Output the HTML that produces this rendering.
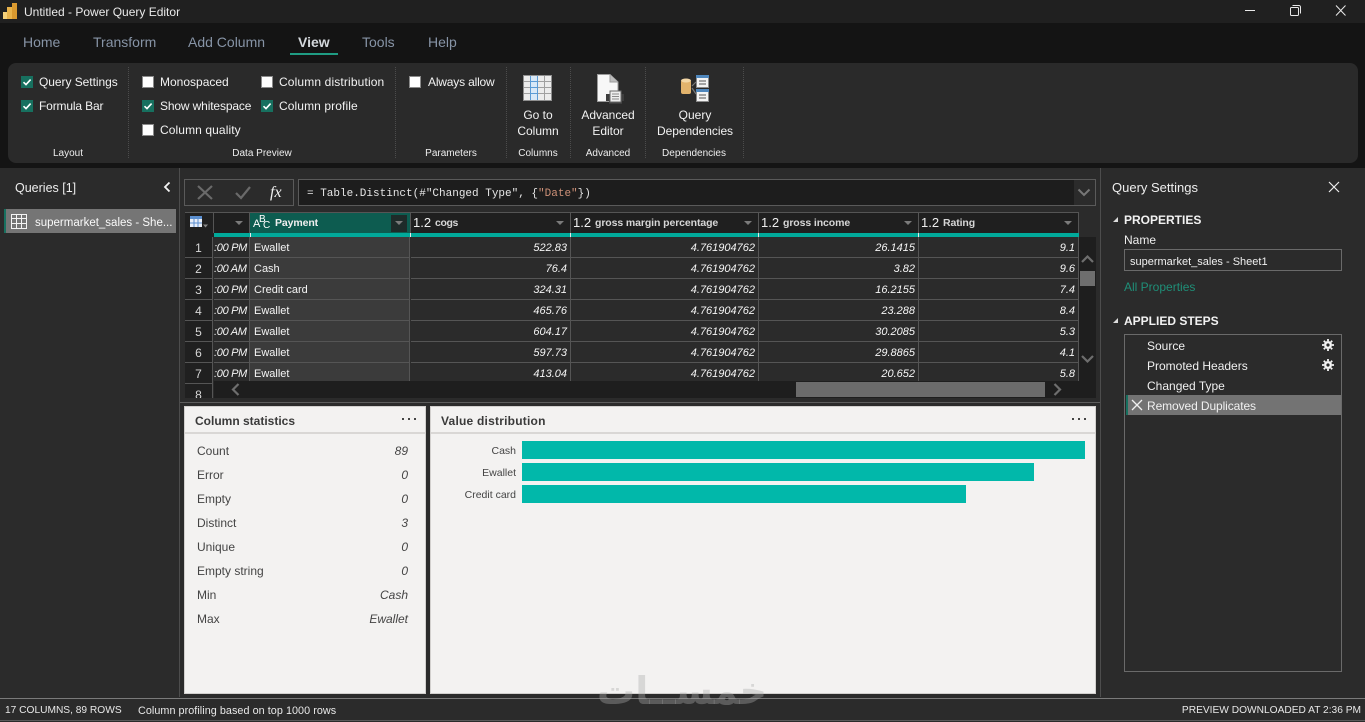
<!DOCTYPE html>
<html lang="en">
<head>
<meta charset="utf-8">
<title>Untitled - Power Query Editor</title>
<style>
html,body{margin:0;padding:0;width:1365px;height:722px;overflow:hidden;background:#2b2b2b}
body{position:relative;font-family:"Liberation Sans",sans-serif;font-size:12px;color:#f0f0f0}
.a,.t,svg{position:absolute}
.t{white-space:nowrap;line-height:16px;height:16px}
.tab{font-size:14px;color:#8794a6;top:34px}
.cb{position:absolute;width:12px;height:12px;border:1px solid #8a8a8a;background:#fff;box-sizing:border-box}
.cb.on{background:#17705f;border-color:#17705f}
.cb.on svg{left:-1px;top:-1px}
.lbl{font-size:12px;color:#f2f2f2}
.grp{font-size:10px;color:#eee;top:146px;transform:translateX(-50%)}
.div{position:absolute;top:67px;height:91px;width:0;border-left:1px dotted #4c4c4c}
.ctr{transform:translateX(-50%);font-size:12px;color:#f2f2f2}
.r{position:absolute;left:185px;width:894px;height:21px;overflow:hidden}
.c{position:absolute;top:0;height:20px;line-height:22px;border-bottom:1px solid #555;border-right:1px solid #555;font-size:11px;white-space:nowrap;box-sizing:content-box;overflow:hidden;color:#f5f5f5}
.n{text-align:right;font-style:italic;padding-right:3px;box-sizing:border-box;height:21px}
.rn{left:0;width:28px;text-align:center;background:#202020;font-size:12px;color:#d8d8d8;box-sizing:border-box;height:21px}
.tm{left:29px;width:36px;text-align:left;font-style:italic;box-sizing:border-box;height:21px;letter-spacing:-.3px}
.pay{left:65px;width:160px;background:#3b3b3b;padding-left:4px;box-sizing:border-box;height:21px}
.c1{left:226px;width:160px}
.c2{left:386px;width:188px}
.c3{left:574px;width:160px}
.c4{left:734px;width:160px}
.h{position:absolute;top:212px;height:21px;background:#1f1f1f;border:1px solid #555;border-width:1px 1px 0 0;box-sizing:border-box;color:#e4e4e4}
.ty{position:absolute;left:2px;top:1px;font-size:13px;line-height:18px;color:#eee}
.hn{position:absolute;top:1px;font-size:10.5px;font-weight:bold;line-height:18px;white-space:nowrap;color:#d6d6d6;letter-spacing:-.1px}
.ar{position:absolute;top:8px;width:0;height:0;border:4px solid transparent;border-top:4px solid #7b7b7b;border-bottom:0}
.panel{position:absolute;top:406px;height:288px;background:#f3f2f1;border:1px solid #d2d0ce;box-sizing:border-box}
.ph{position:absolute;left:0;right:0;top:0;height:25px;border-bottom:2px solid #d9d7d5}
.st{font-size:12px;color:#444;}
.sv{font-size:12px;color:#444;font-style:italic;text-align:right;width:60px}
.bar{position:absolute;left:522px;height:18px;background:#01b8aa}
.bl{font-size:10.5px;color:#444;text-align:right;width:90px;left:426px}
.stp{font-size:12px;color:#f0f0f0;left:1147px}
</style>
</head>
<body>
<!-- backgrounds -->
<div class="a" style="left:0;top:0;width:1365px;height:23px;background:#202020"></div>
<div class="a" style="left:0;top:23px;width:1365px;height:145px;background:#141414"></div>
<div class="a" style="left:8px;top:63px;width:1350px;height:100px;background:#2a2a2a;border-radius:8px"></div>

<!-- title bar -->
<svg style="left:3px;top:3px" width="15" height="16" viewBox="0 0 15 16"><rect x="0" y="9" width="5" height="7" fill="#f6d27a"/><rect x="4" y="4" width="5" height="12" fill="#e9b44c"/><rect x="9" y="0" width="5" height="16" fill="#d9992f"/></svg>
<div class="t" style="left:24px;top:4px;font-size:12px;color:#eaeaea">Untitled - Power Query Editor</div>
<svg style="left:1240px;top:4px" width="120" height="14" viewBox="0 0 120 14" fill="none" stroke="#e8e8e8" stroke-width="1"><path d="M5 6.500H15"/><rect x="50.500" y="3.500" width="8" height="8" rx="1"/><path d="M52.500 1.500H59a1.500 1.500 0 0 1 1.500 1.500V9.500"/><path d="M96 1.500L105.500 11.500M105.500 1.500L96 11.500"/></svg>

<!-- tabs -->
<div class="t tab" style="left:23px">Home</div>
<div class="t tab" style="left:93px">Transform</div>
<div class="t tab" style="left:188px">Add Column</div>
<div class="t tab" style="left:298px;color:#d4d8dc;font-weight:bold">View</div>
<div class="t tab" style="left:362px">Tools</div>
<div class="t tab" style="left:428px">Help</div>
<div class="a" style="left:290px;top:53px;width:48px;height:2px;background:#1f9c83"></div>

<!-- ribbon check boxes -->
<div class="cb on" style="left:21px;top:76px"><svg width="12" height="12" viewBox="0 0 12 12"><path d="M2.500 6.200L5 8.600L9.600 3.600" fill="none" stroke="#fff" stroke-width="1.600"/></svg></div>
<div class="t lbl" style="left:39px;top:74px;letter-spacing:-.05px">Query Settings</div>
<div class="cb on" style="left:21px;top:100px"><svg width="12" height="12" viewBox="0 0 12 12"><path d="M2.500 6.200L5 8.600L9.600 3.600" fill="none" stroke="#fff" stroke-width="1.600"/></svg></div>
<div class="t lbl" style="left:39px;top:98px;letter-spacing:-.15px">Formula Bar</div>
<div class="cb" style="left:142px;top:76px"></div>
<div class="t lbl" style="left:160px;top:74px">Monospaced</div>
<div class="cb on" style="left:142px;top:100px"><svg width="12" height="12" viewBox="0 0 12 12"><path d="M2.500 6.200L5 8.600L9.600 3.600" fill="none" stroke="#fff" stroke-width="1.600"/></svg></div>
<div class="t lbl" style="left:160px;top:98px;letter-spacing:-.14px">Show whitespace</div>
<div class="cb" style="left:142px;top:124px"></div>
<div class="t lbl" style="left:160px;top:122px;letter-spacing:.1px">Column quality</div>
<div class="cb" style="left:261px;top:76px"></div>
<div class="t lbl" style="left:279px;top:74px;letter-spacing:.14px">Column distribution</div>
<div class="cb on" style="left:261px;top:100px"><svg width="12" height="12" viewBox="0 0 12 12"><path d="M2.500 6.200L5 8.600L9.600 3.600" fill="none" stroke="#fff" stroke-width="1.600"/></svg></div>
<div class="t lbl" style="left:279px;top:98px;letter-spacing:.1px">Column profile</div>
<div class="cb" style="left:409px;top:76px"></div>
<div class="t lbl" style="left:428px;top:74px;letter-spacing:-.18px">Always allow</div>

<div class="div" style="left:128px"></div>
<div class="div" style="left:395px"></div>
<div class="div" style="left:506px"></div>
<div class="div" style="left:570px"></div>
<div class="div" style="left:645px"></div>
<div class="div" style="left:743px"></div>

<div class="t grp" style="left:68px">Layout</div>
<div class="t grp" style="left:262px">Data Preview</div>
<div class="t grp" style="left:451px">Parameters</div>
<div class="t grp" style="left:538px">Columns</div>
<div class="t grp" style="left:608px">Advanced</div>
<div class="t grp" style="left:694px">Dependencies</div>

<!-- Go to column icon -->
<svg style="left:523px;top:75px" width="30" height="27" viewBox="0 0 30 27">
<rect x="0.500" y="0.500" width="28" height="25" fill="#ececec" stroke="#8f8f8f"/>
<rect x="7" y="1" width="7" height="24" fill="#d8e8f7"/>
<path d="M7.500 1V25M14.500 1V25" stroke="#5b9bd5" stroke-width="1"/>
<path d="M21.500 1V25M1 6.500H28M1 12.500H28M1 18.500H28" stroke="#a0a0a0" stroke-width="1"/>
<path d="M7 6.500H15M7 12.500H15M7 18.500H15" stroke="#5b9bd5" stroke-width="1"/>
</svg>
<div class="t ctr" style="left:538px;top:107px">Go to</div>
<div class="t ctr" style="left:538px;top:123px">Column</div>

<!-- Advanced editor icon -->
<svg style="left:597px;top:74px" width="28" height="31" viewBox="0 0 28 31">
<path d="M0.500 0.500H13L21 8V27.500H0.500Z" fill="#f7f7f7" stroke="#9a9a9a"/>
<path d="M13 0.500V8H21" fill="#bdbdbd" stroke="#9a9a9a"/>
<path d="M9 20H27V27H25V30H12V27H9Z" fill="#3d3d3d"/>
<rect x="13" y="17" width="11" height="11" fill="#eeeeee" stroke="#6a6a6a"/>
<path d="M15 20H22M15 22.500H22M15 25H22" stroke="#8a8a8a"/>
</svg>
<div class="t ctr" style="left:608px;top:107px">Advanced</div>
<div class="t ctr" style="left:608px;top:123px">Editor</div>

<!-- Query dependencies icon -->
<svg style="left:680px;top:75px" width="30" height="28" viewBox="0 0 30 28">
<rect x="1" y="5" width="10" height="14" rx="2" fill="#e2b36c"/>
<ellipse cx="6" cy="5.500" rx="5" ry="2" fill="#f3d7a6"/>
<path d="M12 11L16 7M12 13L16 19" stroke="#777" stroke-width="1.200"/>
<rect x="16.500" y="0.500" width="12" height="12" fill="#f4f4f4" stroke="#8a8a8a"/>
<rect x="16" y="0" width="13" height="3" fill="#4f87bd"/>
<path d="M19 6H26M19 9H26" stroke="#555"/>
<rect x="16.500" y="14.500" width="12" height="12" fill="#f4f4f4" stroke="#8a8a8a"/>
<rect x="16" y="14" width="13" height="3" fill="#4f87bd"/>
<path d="M19 20H26M19 23H26" stroke="#555"/>
</svg>
<div class="t ctr" style="left:695px;top:107px">Query</div>
<div class="t ctr" style="left:695px;top:123px;letter-spacing:-.06px">Dependencies</div>

<!-- left pane -->
<div class="a" style="left:179px;top:168px;width:1px;height:529px;background:#4d4d4d"></div>
<div class="t" style="left:15px;top:180px;font-size:12.500px;color:#eee">Queries [1]</div>
<svg style="left:162px;top:181px" width="10" height="12" viewBox="0 0 10 12"><path d="M7.500 1.500L3 6L7.500 10.500" fill="none" stroke="#f4f4f4" stroke-width="1.800"/></svg>
<div class="a" style="left:4px;top:209px;width:172px;height:24px;background:#757575"></div>
<div class="a" style="left:4px;top:209px;width:2px;height:24px;background:#17705f"></div>
<svg style="left:11px;top:214px" width="16" height="15" viewBox="0 0 16 15"><path d="M0.500 0.500H15.500V14.500H0.500ZM0.500 4.500H15.500M0.500 9.500H15.500M5.500 0.500V14.500M10.500 0.500V14.500" fill="none" stroke="#f4f4f4"/></svg>
<div class="t" style="left:35px;top:215px;font-size:11.500px;color:#fafafa">supermarket_sales - She...</div>

<!-- formula bar -->
<div class="a" style="left:184px;top:179px;width:110px;height:27px;border:1px solid #5a5a5a;box-sizing:border-box"></div>
<svg style="left:196px;top:184px" width="90" height="18" viewBox="0 0 90 18" fill="none"><path d="M2 2L16 15M16 2L2 15" stroke="#6a6a6a" stroke-width="2.200"/><path d="M40 9L45 14L54 3" stroke="#6a6a6a" stroke-width="2.200"/></svg>
<div class="t" style="left:270px;top:185px;font-family:'Liberation Serif',serif;font-style:italic;font-size:16px;color:#f0f0f0">fx</div>
<div class="a" style="left:298px;top:179px;width:798px;height:27px;border:1px solid #5a5a5a;box-sizing:border-box;background:#1d1d1d"></div>
<div class="a" style="left:1074px;top:180px;width:21px;height:25px;background:#2b2b2b"></div>
<div class="t" style="left:307px;top:186px;font-family:'Liberation Mono',monospace;font-size:11px;color:#e6e6e6">= Table.Distinct(#"Changed Type", {<span style="color:#ce9178">"Date"</span>})</div>
<svg style="left:1077px;top:188px" width="14" height="10" viewBox="0 0 14 10"><path d="M1.500 1.500L7 7L12.500 1.500" fill="none" stroke="#777" stroke-width="2"/></svg>

<!-- table headers -->
<div class="a" style="left:185px;top:212px;width:894px;height:1px;background:#555"></div>
<div class="h" style="left:185px;width:29px;background:#202020"></div>
<svg style="left:190px;top:216px" width="18" height="13" viewBox="0 0 18 13"><rect x="0" y="0" width="12" height="11" fill="#e8eef8"/><rect x="0" y="0" width="12" height="3" fill="#5b8fd0"/><path d="M4 3V11M8 3V11M0 7H12" stroke="#5b8fd0"/><path d="M13 8.500H18L15.500 11.500Z" fill="#888"/></svg>
<div class="h" style="left:214px;width:36px"><div class="ar" style="left:21px"></div></div>
<div class="h" style="left:250px;width:161px;background:#0d5c50;color:#fff">
 <div class="t" style="left:3px;top:4px;font-size:11px;color:#fff;line-height:14px">A</div>
 <div class="t" style="left:9px;top:0;font-size:10px;color:#fff;line-height:14px">B</div>
 <div class="t" style="left:13px;top:6px;font-size:10px;color:#fff;line-height:14px">C</div>
 <div class="hn" style="left:25px;color:#f0f0f0">Payment</div>
 <div class="a" style="left:141px;top:2px;width:16px;height:17px;background:#1e2b29"></div>
 <div class="ar" style="left:145px"></div>
</div>
<div class="h" style="left:411px;width:160px"><div class="ty">1.2</div><div class="hn" style="left:24px;letter-spacing:-.4px">cogs</div><div class="ar" style="left:145px"></div></div>
<div class="h" style="left:571px;width:188px"><div class="ty">1.2</div><div class="hn" style="left:24px">gross margin percentage</div><div class="ar" style="left:173px"></div></div>
<div class="h" style="left:759px;width:160px"><div class="ty">1.2</div><div class="hn" style="left:24px">gross income</div><div class="ar" style="left:145px"></div></div>
<div class="h" style="left:919px;width:160px"><div class="ty">1.2</div><div class="hn" style="left:24px">Rating</div><div class="ar" style="left:145px"></div></div>
<div class="a" style="left:214px;top:233px;width:865px;height:4px;background:#01a99a"></div>
<div class="a" style="left:185px;top:233px;width:29px;height:4px;background:#202020"></div>
<div class="a" style="left:250px;top:233px;width:1px;height:4px;background:#e8e8e8"></div>
<div class="a" style="left:410px;top:233px;width:1px;height:4px;background:#e8e8e8"></div>
<div class="a" style="left:570px;top:233px;width:1px;height:4px;background:#e8e8e8"></div>
<div class="a" style="left:758px;top:233px;width:1px;height:4px;background:#e8e8e8"></div>
<div class="a" style="left:918px;top:233px;width:1px;height:4px;background:#e8e8e8"></div>

<!-- rows -->
<div class="r" style="top:237px"><div class="c rn">1</div><div class="c tm">:00 PM</div><div class="c pay">Ewallet</div><div class="c n c1">522.83</div><div class="c n c2">4.761904762</div><div class="c n c3">26.1415</div><div class="c n c4">9.1</div></div>
<div class="r" style="top:258px"><div class="c rn">2</div><div class="c tm">:00 AM</div><div class="c pay">Cash</div><div class="c n c1">76.4</div><div class="c n c2">4.761904762</div><div class="c n c3">3.82</div><div class="c n c4">9.6</div></div>
<div class="r" style="top:279px"><div class="c rn">3</div><div class="c tm">:00 PM</div><div class="c pay">Credit card</div><div class="c n c1">324.31</div><div class="c n c2">4.761904762</div><div class="c n c3">16.2155</div><div class="c n c4">7.4</div></div>
<div class="r" style="top:300px"><div class="c rn">4</div><div class="c tm">:00 PM</div><div class="c pay">Ewallet</div><div class="c n c1">465.76</div><div class="c n c2">4.761904762</div><div class="c n c3">23.288</div><div class="c n c4">8.4</div></div>
<div class="r" style="top:321px"><div class="c rn">5</div><div class="c tm">:00 AM</div><div class="c pay">Ewallet</div><div class="c n c1">604.17</div><div class="c n c2">4.761904762</div><div class="c n c3">30.2085</div><div class="c n c4">5.3</div></div>
<div class="r" style="top:342px"><div class="c rn">6</div><div class="c tm">:00 PM</div><div class="c pay">Ewallet</div><div class="c n c1">597.73</div><div class="c n c2">4.761904762</div><div class="c n c3">29.8865</div><div class="c n c4">4.1</div></div>
<div class="r" style="top:363px"><div class="c rn">7</div><div class="c tm">:00 PM</div><div class="c pay">Ewallet</div><div class="c n c1">413.04</div><div class="c n c2">4.761904762</div><div class="c n c3">20.652</div><div class="c n c4">5.8</div></div>
<div class="r" style="top:384px;width:29px;height:14px"><div class="c rn" style="border-bottom:0">8</div></div>

<!-- scrollbars -->
<div class="a" style="left:1079px;top:237px;width:17px;height:161px;background:#1e1e1e"></div>
<svg style="left:1081px;top:254px" width="13" height="10" viewBox="0 0 13 10"><path d="M1 8L6.500 2.500L12 8" fill="none" stroke="#6e6e6e" stroke-width="2.200"/></svg>
<div class="a" style="left:1080px;top:271px;width:15px;height:15px;background:#6e6e6e"></div>
<svg style="left:1081px;top:354px" width="13" height="10" viewBox="0 0 13 10"><path d="M1 2L6.500 7.500L12 2" fill="none" stroke="#6e6e6e" stroke-width="2.200"/></svg>
<div class="a" style="left:214px;top:381px;width:882px;height:17px;background:#1e1e1e"></div>
<div class="a" style="left:796px;top:382px;width:249px;height:15px;background:#6b6b6b"></div>
<svg style="left:230px;top:383px" width="11" height="13" viewBox="0 0 11 13"><path d="M8.500 1L3 6.500L8.500 12" fill="none" stroke="#6e6e6e" stroke-width="2.200"/></svg>
<svg style="left:1052px;top:383px" width="11" height="13" viewBox="0 0 11 13"><path d="M2.500 1L8 6.500L2.500 12" fill="none" stroke="#6e6e6e" stroke-width="2.200"/></svg>
<div class="a" style="left:180px;top:402px;width:920px;height:1px;background:#5d5d5d"></div>

<!-- Column statistics -->
<div class="panel" style="left:184px;width:242px"><div class="ph"></div></div>
<div class="t" style="left:195px;top:413px;font-size:12px;font-weight:bold;color:#3a3a3a">Column statistics</div>
<svg style="left:401px;top:418px" width="16" height="3" viewBox="0 0 16 3"><path d="M1 0h2v2H1zM7 0h2v2H7zM13 0h2v2h-2z" fill="#444"/></svg>
<div class="t st" style="left:197px;top:443px">Count</div><div class="t sv" style="left:348px;top:443px">89</div>
<div class="t st" style="left:197px;top:467px">Error</div><div class="t sv" style="left:348px;top:467px">0</div>
<div class="t st" style="left:197px;top:491px">Empty</div><div class="t sv" style="left:348px;top:491px">0</div>
<div class="t st" style="left:197px;top:515px">Distinct</div><div class="t sv" style="left:348px;top:515px">3</div>
<div class="t st" style="left:197px;top:539px">Unique</div><div class="t sv" style="left:348px;top:539px">0</div>
<div class="t st" style="left:197px;top:563px">Empty string</div><div class="t sv" style="left:348px;top:563px">0</div>
<div class="t st" style="left:197px;top:587px">Min</div><div class="t sv" style="left:348px;top:587px">Cash</div>
<div class="t st" style="left:197px;top:611px">Max</div><div class="t sv" style="left:348px;top:611px">Ewallet</div>

<!-- Value distribution -->
<div class="panel" style="left:430px;width:666px"><div class="ph"></div></div>
<div class="t" style="left:441px;top:413px;font-size:12px;font-weight:bold;color:#3a3a3a;letter-spacing:.22px">Value distribution</div>
<svg style="left:1071px;top:418px" width="16" height="3" viewBox="0 0 16 3"><path d="M1 0h2v2H1zM7 0h2v2H7zM13 0h2v2h-2z" fill="#444"/></svg>
<div class="t bl" style="top:443px">Cash</div><div class="bar" style="top:441px;width:563px"></div>
<div class="t bl" style="top:465px">Ewallet</div><div class="bar" style="top:463px;width:512px"></div>
<div class="t bl" style="top:487px">Credit card</div><div class="bar" style="top:485px;width:444px"></div>

<!-- right pane -->
<div class="a" style="left:1100px;top:168px;width:1px;height:529px;background:#4d4d4d"></div>
<div class="t" style="left:1112px;top:180px;font-size:13px;color:#eee">Query Settings</div>
<svg style="left:1328px;top:181px" width="12" height="12" viewBox="0 0 12 12"><path d="M1 1L11 11M11 1L1 11" fill="none" stroke="#eee" stroke-width="1.200"/></svg>
<svg style="left:1112px;top:216px" width="7" height="7" viewBox="0 0 7 7"><path d="M6 1V6H1Z" fill="#ddd"/></svg>
<div class="t" style="left:1124px;top:212px;font-size:12px;font-weight:bold;color:#f2f2f2">PROPERTIES</div>
<div class="t" style="left:1124px;top:232px;font-size:12px;color:#eee">Name</div>
<div class="a" style="left:1124px;top:249px;width:218px;height:22px;border:1px solid #6a6a6a;box-sizing:border-box"></div>
<div class="t" style="left:1130px;top:254px;font-size:11px;color:#f0f0f0">supermarket_sales - Sheet1</div>
<div class="t" style="left:1124px;top:279px;font-size:12px;color:#1f8f78">All Properties</div>
<svg style="left:1112px;top:317px" width="7" height="7" viewBox="0 0 7 7"><path d="M6 1V6H1Z" fill="#ddd"/></svg>
<div class="t" style="left:1124px;top:313px;font-size:12px;font-weight:bold;color:#f2f2f2">APPLIED STEPS</div>
<div class="a" style="left:1124px;top:334px;width:218px;height:338px;border:1px solid #6a6a6a;box-sizing:border-box"></div>
<div class="a" style="left:1126px;top:395px;width:215px;height:20px;background:#737373"></div>
<div class="a" style="left:1126px;top:395px;width:2px;height:20px;background:#17705f"></div>
<div class="t stp" style="top:338px">Source</div>
<div class="t stp" style="top:358px">Promoted Headers</div>
<div class="t stp" style="top:378px">Changed Type</div>
<div class="t stp" style="top:398px;letter-spacing:-.1px">Removed Duplicates</div>
<svg style="left:1322px;top:339px" width="12" height="12" viewBox="0 0 12 12"><circle cx="6" cy="6" r="2.800" fill="none" stroke="#f4f4f4" stroke-width="2.400"/><path d="M6 0V12M0 6H12M1.800 1.800L10.200 10.200M10.200 1.800L1.800 10.200" stroke="#f4f4f4" stroke-width="1.800" stroke-dasharray="2 8 2 0"/></svg>
<svg style="left:1322px;top:359px" width="12" height="12" viewBox="0 0 12 12"><circle cx="6" cy="6" r="2.800" fill="none" stroke="#f4f4f4" stroke-width="2.400"/><path d="M6 0V12M0 6H12M1.800 1.800L10.200 10.200M10.200 1.800L1.800 10.200" stroke="#f4f4f4" stroke-width="1.800" stroke-dasharray="2 8 2 0"/></svg>
<svg style="left:1131px;top:399px" width="12" height="12" viewBox="0 0 12 12"><path d="M1 1L11 11M11 1L1 11" fill="none" stroke="#f0f0f0" stroke-width="1.300"/></svg>

<!-- status bar -->
<div class="a" style="left:0;top:698px;width:1365px;height:1px;background:#7a7a7a"></div>
<div class="a" style="left:0;top:720px;width:1365px;height:1px;background:#5a5a5a"></div>
<div class="t" style="left:5px;top:703px;font-size:10.200px;color:#e8e8e8">17 COLUMNS, 89 ROWS</div>
<div class="t" style="left:138px;top:703px;font-size:10.800px;color:#e8e8e8;letter-spacing:.05px">Column profiling based on top 1000 rows</div>
<div class="t" style="right:4px;top:703px;font-size:10.200px;color:#e8e8e8">PREVIEW DOWNLOADED AT 2:36 PM</div>

<!-- watermark -->
<div class="t" dir="rtl" style="left:590px;top:668px;width:184px;height:46px;line-height:46px;font-family:'DejaVu Sans',sans-serif;font-size:38px;font-weight:bold;color:rgba(170,170,170,.38);text-align:center">خمســات</div>
</body>
</html>
